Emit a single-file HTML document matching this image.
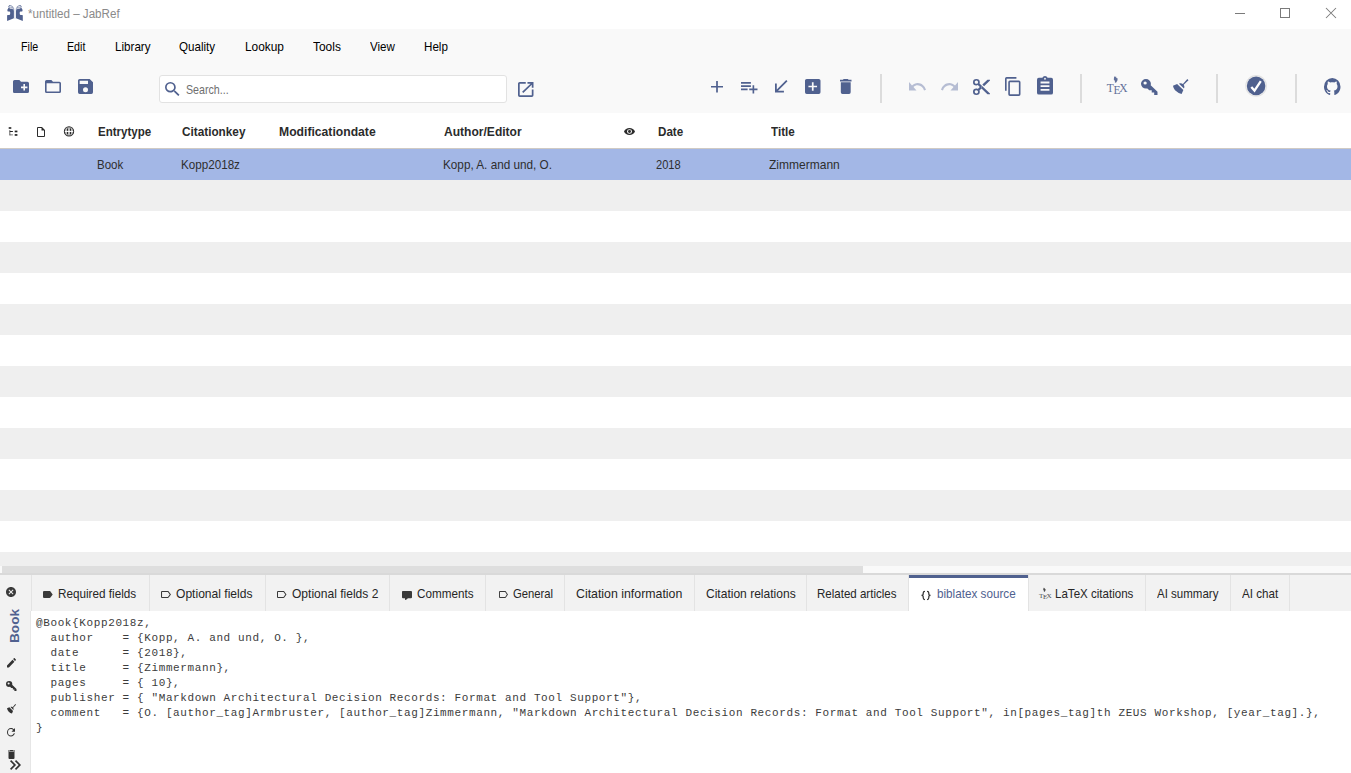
<!DOCTYPE html><html><head><meta charset="utf-8"><title>JabRef</title><style>
*{margin:0;padding:0;box-sizing:border-box}
html,body{width:1351px;height:773px;overflow:hidden;background:#f9f9f9;font-family:'Liberation Sans', sans-serif}
.a{position:absolute}
.t{position:absolute;white-space:pre;transform-origin:0 0;font-family:'Liberation Sans', sans-serif}
.ic{position:absolute;overflow:visible}
.code{position:absolute;font-family:'Liberation Mono',monospace;white-space:pre;color:#3c3c3c}
</style></head><body>
<div class="a" style="left:0;top:0;width:1351px;height:29px;background:#fff"></div>
<div class="a" style="left:159px;top:75px;width:348px;height:28px;background:#fff;border:1px solid #e2e2e2;border-radius:3px"></div>
<div class="a" style="left:880px;top:74px;width:2px;height:29px;background:#dcdcdc"></div>
<div class="a" style="left:1080px;top:74px;width:2px;height:29px;background:#dcdcdc"></div>
<div class="a" style="left:1216px;top:74px;width:2px;height:29px;background:#dcdcdc"></div>
<div class="a" style="left:1295px;top:74px;width:2px;height:29px;background:#dcdcdc"></div>
<div class="a" style="left:0;top:113px;width:1351px;height:35px;background:#fff"></div>
<div class="a" style="left:0;top:148px;width:1351px;height:1px;background:#cfcac4"></div>
<div class="a" style="left:0;top:149px;width:1351px;height:31px;background:#a3b7e6"></div>
<div class="a" style="left:0;top:180px;width:1351px;height:31px;background:#efefef"></div>
<div class="a" style="left:0;top:211px;width:1351px;height:31px;background:#fff"></div>
<div class="a" style="left:0;top:242px;width:1351px;height:31px;background:#efefef"></div>
<div class="a" style="left:0;top:273px;width:1351px;height:31px;background:#fff"></div>
<div class="a" style="left:0;top:304px;width:1351px;height:31px;background:#efefef"></div>
<div class="a" style="left:0;top:335px;width:1351px;height:31px;background:#fff"></div>
<div class="a" style="left:0;top:366px;width:1351px;height:31px;background:#efefef"></div>
<div class="a" style="left:0;top:397px;width:1351px;height:31px;background:#fff"></div>
<div class="a" style="left:0;top:428px;width:1351px;height:31px;background:#efefef"></div>
<div class="a" style="left:0;top:459px;width:1351px;height:31px;background:#fff"></div>
<div class="a" style="left:0;top:490px;width:1351px;height:31px;background:#efefef"></div>
<div class="a" style="left:0;top:521px;width:1351px;height:31px;background:#fff"></div>
<div class="a" style="left:0;top:552px;width:1351px;height:14px;background:#efefef"></div>
<div class="a" style="left:0;top:566px;width:1351px;height:8px;background:#f9f9f9"></div>
<div class="a" style="left:2px;top:566px;width:861px;height:8px;background:#dedede"></div>
<div class="a" style="left:0;top:573px;width:1351px;height:2px;background:#d9d9d9"></div>
<div class="a" style="left:0;top:575px;width:1351px;height:36px;background:#f2f2f2"></div>
<div class="a" style="left:31px;top:575px;width:1px;height:36px;background:#e3e3e3"></div>
<div class="a" style="left:149px;top:575px;width:1px;height:36px;background:#e3e3e3"></div>
<div class="a" style="left:265px;top:575px;width:1px;height:36px;background:#e3e3e3"></div>
<div class="a" style="left:389px;top:575px;width:1px;height:36px;background:#e3e3e3"></div>
<div class="a" style="left:485px;top:575px;width:1px;height:36px;background:#e3e3e3"></div>
<div class="a" style="left:564px;top:575px;width:1px;height:36px;background:#e3e3e3"></div>
<div class="a" style="left:694px;top:575px;width:1px;height:36px;background:#e3e3e3"></div>
<div class="a" style="left:806px;top:575px;width:1px;height:36px;background:#e3e3e3"></div>
<div class="a" style="left:908px;top:575px;width:1px;height:36px;background:#e3e3e3"></div>
<div class="a" style="left:1028px;top:575px;width:1px;height:36px;background:#e3e3e3"></div>
<div class="a" style="left:1145px;top:575px;width:1px;height:36px;background:#e3e3e3"></div>
<div class="a" style="left:1230px;top:575px;width:1px;height:36px;background:#e3e3e3"></div>
<div class="a" style="left:1289px;top:575px;width:1px;height:36px;background:#e3e3e3"></div>
<div class="a" style="left:909px;top:575px;width:119px;height:36px;background:#fff"></div>
<div class="a" style="left:909px;top:575px;width:119px;height:3px;background:#50618f"></div>
<div class="a" style="left:0;top:611px;width:31px;height:162px;background:#f2f2f2"></div>
<div class="a" style="left:30px;top:611px;width:1px;height:162px;background:#e6e6e6"></div>
<div class="a" style="left:31px;top:611px;width:1320px;height:162px;background:#fff"></div><svg class="ic" style="left:13px;top:80px;width:16px;height:13px" viewBox="2 4 20 16" preserveAspectRatio="none"><path fill="#50618f" d="M10,4L12,6H20A2,2 0 0,1 22,8V18A2,2 0 0,1 20,20H4C2.89,20 2,19.1 2,18V6C2,4.89 2.89,4 4,4H10M15,9V12H12V14H15V17H17V14H20V12H17V9H15Z"/></svg>
<svg class="ic" style="left:45px;top:80px;width:16px;height:13px" viewBox="2 4 20 16" preserveAspectRatio="none"><path fill="#50618f" d="M20,18H4V8H20M20,6H12L10,4H4C2.89,4 2,4.89 2,6V18A2,2 0 0,0 4,20H20A2,2 0 0,0 22,18V8C22,6.89 21.1,6 20,6Z"/></svg>
<svg class="ic" style="left:78px;top:79px;width:15px;height:15px" viewBox="3 3 18 18" preserveAspectRatio="none"><path fill="#50618f" d="M15,9H5V5H15M12,19A3,3 0 0,1 9,16A3,3 0 0,1 12,13A3,3 0 0,1 15,16A3,3 0 0,1 12,19M17,3H5C3.89,3 3,3.9 3,5V19A2,2 0 0,0 5,21H19A2,2 0 0,0 21,19V7L17,3Z"/></svg>
<svg class="ic" style="left:164.5px;top:82px;width:14.5px;height:14px" viewBox="3 3 17.5 17.5" preserveAspectRatio="none"><path fill="#50618f" d="M9.5,3A6.5,6.5 0 0,1 16,9.5C16,11.11 15.41,12.59 14.44,13.73L14.71,14H15.5L20.5,19L19,20.5L14,15.5V14.71L13.73,14.44C12.59,15.41 11.11,16 9.5,16A6.5,6.5 0 0,1 3,9.5A6.5,6.5 0 0,1 9.5,3M9.5,5C7,5 5,7 5,9.5C5,12 7,14 9.5,14C12,14 14,12 14,9.5C14,7 12,5 9.5,5Z"/></svg>
<svg class="ic" style="left:517.5px;top:82px;width:15.5px;height:15px" viewBox="3 3 18 18" preserveAspectRatio="none"><path fill="#50618f" d="M14,3V5H17.59L7.76,14.83L9.17,16.24L19,6.41V10H21V3M19,19H5V5H12V3H5C3.89,3 3,3.9 3,5V19A2,2 0 0,0 5,21H19A2,2 0 0,0 21,19V12H19V19Z"/></svg>
<svg class="ic" style="left:711px;top:80.5px;width:12px;height:11.5px" viewBox="5 5 14 14" preserveAspectRatio="none"><path fill="#50618f" d="M19,13H13V19H11V13H5V11H11V5H13V11H19V13Z"/></svg>
<svg class="ic" style="left:740.5px;top:81.5px;width:16.5px;height:11.5px" viewBox="2 6 20 14" preserveAspectRatio="none"><path fill="#50618f" d="M2,16H10V14H2M18,14V10H16V14H12V16H16V20H18V16H22V14M14,6H2V8H14M14,10H2V12H14V10Z"/></svg>
<svg class="ic" style="left:775px;top:80px;width:12.5px;height:12.5px" viewBox="5 5 14 14" preserveAspectRatio="none"><path fill="#50618f" d="M19,6.41L17.59,5L7,15.59V9H5V19H15V17H8.41L19,6.41Z"/></svg>
<svg class="ic" style="left:805px;top:79px;width:15.5px;height:15px" viewBox="3 3 18 18" preserveAspectRatio="none"><path fill="#50618f" d="M17,13H13V17H11V13H7V11H11V7H13V11H17M19,3H5C3.89,3 3,3.89 3,5V19A2,2 0 0,0 5,21H19A2,2 0 0,0 21,19V5C21,3.89 20.1,3 19,3Z"/></svg>
<svg class="ic" style="left:839.5px;top:79px;width:11.5px;height:15px" viewBox="5 3 14 18" preserveAspectRatio="none"><path fill="#50618f" d="M19,4H15.5L14.5,3H9.5L8.5,4H5V6H19M6,19A2,2 0 0,0 8,21H16A2,2 0 0,0 18,19V7H6V19Z"/></svg>
<svg class="ic" style="left:908.5px;top:82px;width:17.0px;height:8.5px" viewBox="2 7 20.469999313354492 9" preserveAspectRatio="none"><path fill="#b6bdd3" d="M12.5,8C9.85,8 7.45,9 5.6,10.6L2,7V16H11L7.38,12.38C8.77,11.22 10.54,10.5 12.5,10.5C16.04,10.5 19.05,12.81 20.1,16L22.47,15.22C21.08,11.03 17.15,8 12.5,8Z"/></svg>
<svg class="ic" style="left:940.5px;top:82px;width:17.0px;height:8.5px" viewBox="1.5399999618530273 7 20.459999084472656 9" preserveAspectRatio="none"><path fill="#b6bdd3" d="M18.4,10.6C16.55,9 14.15,8 11.5,8C6.85,8 2.92,11.03 1.54,15.22L3.9,16C4.95,12.81 7.95,10.5 11.5,10.5C13.45,10.5 15.23,11.22 16.62,12.38L13,16H22V7L18.4,10.6Z"/></svg>
<svg class="ic" style="left:972.5px;top:78.5px;width:17.0px;height:16.0px" viewBox="2 2 20 20" preserveAspectRatio="none"><path fill="#50618f" d="M19,3L13,9L15,11L22,4V3M12,12.5A0.5,0.5 0 0,1 11.5,12A0.5,0.5 0 0,1 12,11.5A0.5,0.5 0 0,1 12.5,12A0.5,0.5 0 0,1 12,12.5M6,20A2,2 0 0,1 4,18C4,16.89 4.9,16 6,16A2,2 0 0,1 8,18C8,19.11 7.1,20 6,20M6,8A2,2 0 0,1 4,6C4,4.89 4.9,4 6,4A2,2 0 0,1 8,6C8,7.11 7.1,8 6,8M9.64,7.64C9.87,7.14 10,6.59 10,6A4,4 0 0,0 6,2A4,4 0 0,0 2,6A4,4 0 0,0 6,10C6.59,10 7.14,9.870 7.64,9.64L10,12L7.64,14.36C7.14,14.13 6.59,14 6,14A4,4 0 0,0 2,18A4,4 0 0,0 6,22A4,4 0 0,0 10,18C10,17.41 9.87,16.86 9.64,16.36L12,14L19,21H22V20L9.64,7.64Z"/></svg>
<svg class="ic" style="left:1005px;top:77px;width:15.5px;height:19px" viewBox="2 1 19 22" preserveAspectRatio="none"><path fill="#50618f" d="M19,21H8V7H19M19,5H8A2,2 0 0,0 6,7V21A2,2 0 0,0 8,23H19A2,2 0 0,0 21,21V7A2,2 0 0,0 19,5M16,1H4A2,2 0 0,0 2,3V17H4V3H16V1Z"/></svg>
<svg class="ic" style="left:1037px;top:75.5px;width:16px;height:18.5px" viewBox="3 1 18 20" preserveAspectRatio="none"><path fill="#50618f" d="M19,3H14.82C14.4,1.84 13.3,1 12,1C10.7,1 9.6,1.84 9.18,3H5A2,2 0 0,0 3,5V19A2,2 0 0,0 5,21H19A2,2 0 0,0 21,19V5A2,2 0 0,0 19,3M12,3A1,1 0 0,1 13,4A1,1 0 0,1 12,5A1,1 0 0,1 11,4A1,1 0 0,1 12,3M7,7H17V9H7V7M7,11H17V13H7V11M7,15H17V17H7V15Z"/></svg>
<svg class="ic" style="left:1141px;top:78.5px;width:16.5px;height:16.0px" viewBox="2 2 20 20" preserveAspectRatio="none"><path fill="#50618f" d="M22,18V22H18V19H15V16H12L9.74,13.74C9.19,13.91 8.61,14 8,14A6,6 0 0,1 2,8A6,6 0 0,1 8,2A6,6 0 0,1 14,8C14,8.61 13.91,9.19 13.74,9.74L22,18M7,5A2,2 0 0,0 5,7A2,2 0 0,0 7,9A2,2 0 0,0 9,7A2,2 0 0,0 7,5Z"/></svg>
<svg class="ic" style="left:1173px;top:79px;width:15.5px;height:15px" viewBox="2.3499999046325684 2.7200000286102295 18.43000030517578 18.43000030517578" preserveAspectRatio="none"><path fill="#50618f" d="M19.36,2.72L20.78,4.14L15.06,9.85C16.07,11.3 16.2,13.07 15.38,14.48L9.5,8.6C10.93,7.78 12.69,7.91 14.14,8.92L19.36,2.72M5.93,17.57C3.92,15.56 2.69,13.16 2.35,10.92L7.23,8.83L14.67,16.27L12.58,21.15C10.34,20.81 7.94,19.58 5.93,17.57Z"/></svg>
<svg class="ic" style="left:1240px;top:70px;width:32px;height:32px" viewBox="1240 70 32 32"><circle cx="1256.1" cy="85.9" r="10.3" fill="none" stroke="#e3e3e3" stroke-width="1.2"/><circle cx="1256.1" cy="85.9" r="9.3" fill="#50618f"/><path d="M1251.3,86.9 L1254.5,90.6 L1260.8,81.2" fill="none" stroke="#fff" stroke-width="2.3" stroke-linejoin="miter"/></svg>
<svg class="ic" style="left:1324px;top:78px;width:16.5px;height:17px" viewBox="2 2 20 19.55240821838379" preserveAspectRatio="none"><path fill="#50618f" d="M12,2A10,10 0 0,0 2,12C2,16.42 4.87,20.17 8.84,21.5C9.34,21.58 9.5,21.27 9.5,21C9.5,20.77 9.5,20.14 9.5,19.31C6.73,19.91 6.14,17.97 6.14,17.97C5.68,16.81 5.03,16.5 5.030,16.5C4.12,15.88 5.1,15.9 5.1,15.9C6.1,15.97 6.63,16.93 6.63,16.93C7.5,18.45 8.97,18 9.54,17.76C9.63,17.11 9.89,16.67 10.17,16.42C7.95,16.17 5.64,15.31 5.64,11.5C5.64,10.39 6,9.5 6.65,8.79C6.55,8.54 6.2,7.5 6.75,6.15C6.75,6.15 7.59,5.88 9.5,7.17C10.29,6.95 11.15,6.84 12,6.84C12.85,6.84 13.71,6.95 14.5,7.17C16.41,5.88 17.25,6.15 17.25,6.15C17.8,7.5 17.45,8.54 17.35,8.79C18,9.5 18.36,10.39 18.36,11.5C18.36,15.32 16.04,16.16 13.81,16.41C14.17,16.72 14.5,17.33 14.5,18.26C14.5,19.6 14.5,20.68 14.5,21.09C14.5,21.36 14.66,21.68 15.17,21.5C19.14,20.16 22,16.42 22,12A10,10 0 0,0 12,2Z"/></svg>
<svg class="ic" style="left:37px;top:126.5px;width:8px;height:10.0px" viewBox="4 2 16 20" preserveAspectRatio="none"><path fill="#2b2b2b" d="M14,2H6A2,2 0 0,0 4,4V20A2,2 0 0,0 6,22H18A2,2 0 0,0 20,20V8L14,2M18,20H6V4H13V9H18V20Z"/></svg>
<svg class="ic" style="left:60px;top:122px;width:18px;height:18px" viewBox="60 122 18 18"><circle cx="69" cy="131.4" r="4.6" fill="#bbb" stroke="#2b2b2b" stroke-width="1.15"/><path d="M67.5,128.5 V134.3 M70.5,128.5 V134.3" stroke="#2b2b2b" stroke-width="1"/><path d="M64.8,131.4 H73.2" stroke="#fff" stroke-width="1.1"/></svg>
<svg class="ic" style="left:623.5px;top:128px;width:11.0px;height:7px" viewBox="1 4.5 22 15" preserveAspectRatio="none"><path fill="#2b2b2b" d="M12,9A3,3 0 0,0 9,12A3,3 0 0,0 12,15A3,3 0 0,0 15,12A3,3 0 0,0 12,9M12,17A5,5 0 0,1 7,12A5,5 0 0,1 12,7A5,5 0 0,1 17,12A5,5 0 0,1 12,17M12,4.5C7,4.5 2.73,7.61 1,12C2.73,16.39 7,19.5 12,19.5C17,19.5 21.27,16.39 23,12C21.27,7.61 17,4.5 12,4.5Z"/></svg>
<svg class="ic" style="left:43.3px;top:591px;width:9.700000000000003px;height:7px" viewBox="3 5 19 14" preserveAspectRatio="none"><path fill="#3a3a3a" d="M17.63,5.84C17.27,5.33 16.67,5 16,5H5A2,2 0 0,0 3,7V17A2,2 0 0,0 5,19H16C16.67,19 17.27,18.66 17.63,18.15L22,12L17.63,5.84Z"/></svg>
<svg class="ic" style="left:161px;top:591px;width:10px;height:7px" viewBox="3 5 19 14" preserveAspectRatio="none"><path fill="#3a3a3a" d="M16,17H5V7H16L19.55,12M17.63,5.84C17.27,5.33 16.67,5 16,5H5A2,2 0 0,0 3,7V17A2,2 0 0,0 5,19H16C16.67,19 17.27,18.66 17.63,18.15L22,12L17.63,5.84Z"/></svg>
<svg class="ic" style="left:277px;top:591px;width:9.5px;height:7px" viewBox="3 5 19 14" preserveAspectRatio="none"><path fill="#3a3a3a" d="M16,17H5V7H16L19.55,12M17.63,5.84C17.27,5.33 16.67,5 16,5H5A2,2 0 0,0 3,7V17A2,2 0 0,0 5,19H16C16.67,19 17.27,18.66 17.63,18.15L22,12L17.63,5.84Z"/></svg>
<svg class="ic" style="left:402px;top:591px;width:10px;height:9px" viewBox="2 2 20 20" preserveAspectRatio="none"><path fill="#3a3a3a" d="M9,22A1,1 0 0,1 8,21V18H4A2,2 0 0,1 2,16V4C2,2.89 2.9,2 4,2H20A2,2 0 0,1 22,4V16A2,2 0 0,1 20,18H13.9L10.2,21.71C10,21.9 9.75,22 9.5,22V22H9Z"/></svg>
<svg class="ic" style="left:498.5px;top:591px;width:9.0px;height:7px" viewBox="3 5 19 14" preserveAspectRatio="none"><path fill="#3a3a3a" d="M16,17H5V7H16L19.55,12M17.63,5.84C17.27,5.33 16.67,5 16,5H5A2,2 0 0,0 3,7V17A2,2 0 0,0 5,19H16C16.67,19 17.27,18.66 17.63,18.15L22,12L17.63,5.84Z"/></svg>
<svg class="ic" style="left:6px;top:586.5px;width:10px;height:10.0px" viewBox="2 2 20 20" preserveAspectRatio="none"><path fill="#3a3a3a" d="M12,2C17.53,2 22,6.47 22,12C22,17.53 17.53,22 12,22C6.47,22 2,17.53 2,12C2,6.47 6.47,2 12,2M15.59,7L12,10.59L8.41,7L7,8.41L10.59,12L7,15.59L8.41,17L12,13.41L15.59,17L17,15.59L13.41,12L17,8.41L15.59,7Z"/></svg>
<svg class="ic" style="left:6.5px;top:657.5px;width:9.0px;height:9.5px" viewBox="3 2.997499942779541 18.002500534057617 18.002500534057617" preserveAspectRatio="none"><path fill="#333" d="M20.71,7.04C21.1,6.65 21.1,6 20.71,5.63L18.37,3.29C18,2.9 17.35,2.9 16.96,3.29L15.12,5.12L18.87,8.87M3,17.25V21H6.75L17.81,9.93L14.06,6.18L3,17.25Z"/></svg>
<svg class="ic" style="left:6px;top:681px;width:10.5px;height:10px" viewBox="2 2 20 20" preserveAspectRatio="none"><path fill="#333" d="M22,18V22H18V19H15V16H12L9.74,13.74C9.19,13.91 8.61,14 8,14A6,6 0 0,1 2,8A6,6 0 0,1 8,2A6,6 0 0,1 14,8C14,8.61 13.91,9.19 13.74,9.74L22,18M7,5A2,2 0 0,0 5,7A2,2 0 0,0 7,9A2,2 0 0,0 9,7A2,2 0 0,0 7,5Z"/></svg>
<svg class="ic" style="left:6.5px;top:704px;width:9.0px;height:9.5px" viewBox="2.3499999046325684 2.7200000286102295 18.43000030517578 18.43000030517578" preserveAspectRatio="none"><path fill="#333" d="M19.36,2.72L20.78,4.14L15.06,9.85C16.07,11.3 16.2,13.07 15.38,14.48L9.5,8.6C10.93,7.78 12.69,7.91 14.14,8.92L19.36,2.72M5.93,17.57C3.92,15.56 2.69,13.16 2.35,10.92L7.23,8.83L14.67,16.27L12.58,21.15C10.34,20.81 7.94,19.58 5.93,17.57Z"/></svg>
<svg class="ic" style="left:7px;top:727.5px;width:8px;height:8.5px" viewBox="4 4 16 16" preserveAspectRatio="none"><path fill="#333" d="M17.65,6.35C16.2,4.9 14.21,4 12,4A8,8 0 0,0 4,12A8,8 0 0,0 12,20C15.73,20 18.84,17.45 19.73,14H17.65C16.83,16.33 14.61,18 12,18A6,6 0 0,1 6,12A6,6 0 0,1 12,6C13.66,6 15.14,6.690 16.22,7.78L13,11H20V4L17.65,6.35Z"/></svg>
<svg class="ic" style="left:7.5px;top:750px;width:7.0px;height:9px" viewBox="5 3 14 18" preserveAspectRatio="none"><path fill="#333" d="M19,4H15.5L14.5,3H9.5L8.5,4H5V6H19M6,19A2,2 0 0,0 8,21H16A2,2 0 0,0 18,19V7H6V19Z"/></svg>
<svg class="ic" style="left:10px;top:760px;width:11px;height:10px" viewBox="5.590000152587891 6 13.40999984741211 12" preserveAspectRatio="none"><path fill="#333" d="M5.59,7.41L7,6L13,12L7,18L5.59,16.59L10.17,12L5.59,7.41M11.59,7.41L13,6L19,12L13,18L11.59,16.59L16.17,12L11.59,7.41Z"/></svg><svg class="ic" style="left:0;top:0;width:30px;height:25px" viewBox="0 0 30 25"><g fill="#50618f"><g><path d="M7.4,9.6 Q7.5,9.1 8.2,9.1 L12.6,9.1 L13.9,10.4 L13.9,18.2 L7.1,20.9 L7.1,15.4 Q7.1,15 7.6,15 L9.4,14.9 Q10.2,14.7 10.2,13.6 L10.2,12.6 Q10.2,11.6 9.2,11.5 L8,11.4 Q7.4,11.3 7.4,10.8 Z"/><path d="M8.1,7.6 L8.3,6.2 L9.6,4.9 L10.8,5.1 L12.4,6.2 L13.9,7.4 L13.9,10.2 L12.6,9.1 L8.1,9.1 Z"/><path d="M7.9,7.4 L13.9,8.9 M8.4,6 L13.9,7.5 M10.9,5 L10.9,9" stroke="#fff" stroke-width="0.7"/></g><g transform="translate(29.9,0) scale(-1,1)"><path d="M7.4,9.6 Q7.5,9.1 8.2,9.1 L12.6,9.1 L13.9,10.4 L13.9,18.2 L7.1,20.9 L7.1,15.4 Q7.1,15 7.6,15 L9.4,14.9 Q10.2,14.7 10.2,13.6 L10.2,12.6 Q10.2,11.6 9.2,11.5 L8,11.4 Q7.4,11.3 7.4,10.8 Z"/><path d="M8.1,7.6 L8.3,6.2 L9.6,4.9 L10.8,5.1 L12.4,6.2 L13.9,7.4 L13.9,10.2 L12.6,9.1 L8.1,9.1 Z"/><path d="M7.9,7.4 L13.9,8.9 M8.4,6 L13.9,7.5 M10.9,5 L10.9,9" stroke="#fff" stroke-width="0.7"/></g><rect x="14.3" y="8.5" width="1.3" height="10.5" opacity="0.2"/></g></svg>
<div class="a" style="left:1235px;top:13px;width:10px;height:1px;background:#7a7a7a"></div>
<div class="a" style="left:1280px;top:8px;width:10px;height:10px;border:1px solid #7a7a7a"></div>
<svg class="ic" style="left:1325px;top:7px;width:12px;height:12px" viewBox="0 0 12 12"><path d="M1,1 L11,11 M11,1 L1,11" stroke="#7a7a7a" stroke-width="1.05"/></svg>
<svg class="ic" style="left:0;top:120px;width:24px;height:20px" viewBox="0 120 24 20"><g fill="#222"><rect x="8.7" y="127.2" width="2.6" height="1.6"/><rect x="9.1" y="130.1" width="1.3" height="5.3" opacity="0.55"/><rect x="9.8" y="131" width="3.1" height="1" /><rect x="9.8" y="134.3" width="3.1" height="1.1" opacity="0.55"/><rect x="14.7" y="130.6" width="2.7" height="1.7"/><rect x="14.7" y="134.1" width="2.7" height="1.7"/></g></svg>
<svg class="ic" style="left:1107px;top:74.5px;width:22.0px;height:20.0px" viewBox="0 0 22 20"><g fill="#50618f" font-family="Liberation Serif, serif" font-size="11.5"><g opacity="0.9"><text x="-0.2" y="17.2">T</text><text x="6.4" y="19.1">E</text><text x="12.2" y="17.2">X</text></g><path d="M7.2,1 L8,2.3 L9,1.2 L9.4,3 L10.7,3.6 L10.4,5.5 L9.2,7.6 L7.9,7.7 L7.9,6 L6.8,4.5 Z" opacity="0.9"/></g></svg>
<svg class="ic" style="left:1038.8px;top:586.8px;width:13.64px;height:12.4px" viewBox="0 0 22 20"><g fill="#3a3a3a" font-family="Liberation Serif, serif" font-size="11.5"><g opacity="0.9"><text x="-0.2" y="17.2">T</text><text x="6.4" y="19.1">E</text><text x="12.2" y="17.2">X</text></g><path d="M7.2,1 L8,2.3 L9,1.2 L9.4,3 L10.7,3.6 L10.4,5.5 L9.2,7.6 L7.9,7.7 L7.9,6 L6.8,4.5 Z" opacity="0.9"/></g></svg>
<svg class="ic" style="left:915px;top:585px;width:20px;height:20px" viewBox="915 585 20 20"><g fill="none" stroke="#333" stroke-width="1.25"><path d="M925,591.3 Q923.2,591.3 923.2,593 L923.2,594.3 Q923.2,595.4 921.5,595.4 Q923.2,595.4 923.2,596.6 L923.2,597.8 Q923.2,599.6 925,599.6"/><path d="M927,591.3 Q928.8,591.3 928.8,593 L928.8,594.3 Q928.8,595.4 930.5,595.4 Q928.8,595.4 928.8,596.6 L928.8,597.8 Q928.8,599.6 927,599.6"/></g></svg>
<div class="t" style="left:8.0px;top:642.5px;font-size:13px;line-height:13px;font-weight:700;color:#50618f;transform:rotate(-90deg) scaleX(1.05)">Book</div><div class="t" style="left:28.00px;top:8.00px;font-size:12px;line-height:12px;font-weight:400;color:#8a8a8a;transform:scaleX(0.9672)">*untitled – JabRef</div>
<div class="t" style="left:21.00px;top:40.00px;font-size:13px;line-height:13px;font-weight:400;color:#000;transform:scaleX(0.8200)">File</div>
<div class="t" style="left:67.00px;top:40.00px;font-size:13px;line-height:13px;font-weight:400;color:#000;transform:scaleX(0.8200)">Edit</div>
<div class="t" style="left:115.00px;top:40.00px;font-size:13px;line-height:13px;font-weight:400;color:#000;transform:scaleX(0.8945)">Library</div>
<div class="t" style="left:179.00px;top:40.00px;font-size:13px;line-height:13px;font-weight:400;color:#000;transform:scaleX(0.8924)">Quality</div>
<div class="t" style="left:245.00px;top:40.00px;font-size:13px;line-height:13px;font-weight:400;color:#000;transform:scaleX(0.9137)">Lookup</div>
<div class="t" style="left:313.00px;top:40.00px;font-size:13px;line-height:13px;font-weight:400;color:#000;transform:scaleX(0.9184)">Tools</div>
<div class="t" style="left:370.00px;top:40.00px;font-size:13px;line-height:13px;font-weight:400;color:#000;transform:scaleX(0.8898)">View</div>
<div class="t" style="left:424.00px;top:40.00px;font-size:13px;line-height:13px;font-weight:400;color:#000;transform:scaleX(0.8945)">Help</div>
<div class="t" style="left:186.00px;top:83.00px;font-size:13px;line-height:13px;font-weight:400;color:#6f6f6f;transform:scaleX(0.8206)">Search...</div>
<div class="t" style="left:97.66px;top:125.00px;font-size:13px;line-height:13px;font-weight:700;color:#2b2b2b;transform:scaleX(0.8873)">Entrytype</div>
<div class="t" style="left:182.45px;top:125.00px;font-size:13px;line-height:13px;font-weight:700;color:#2b2b2b;transform:scaleX(0.9051)">Citationkey</div>
<div class="t" style="left:278.65px;top:125.00px;font-size:13px;line-height:13px;font-weight:700;color:#2b2b2b;transform:scaleX(0.9358)">Modificationdate</div>
<div class="t" style="left:444.23px;top:125.00px;font-size:13px;line-height:13px;font-weight:700;color:#2b2b2b;transform:scaleX(0.9271)">Author/Editor</div>
<div class="t" style="left:657.65px;top:125.00px;font-size:13px;line-height:13px;font-weight:700;color:#2b2b2b;transform:scaleX(0.8929)">Date</div>
<div class="t" style="left:770.58px;top:125.00px;font-size:13px;line-height:13px;font-weight:700;color:#2b2b2b;transform:scaleX(0.8963)">Title</div>
<div class="t" style="left:96.68px;top:158.00px;font-size:13px;line-height:13px;font-weight:400;color:#2e2e2e;transform:scaleX(0.8866)">Book</div>
<div class="t" style="left:181.46px;top:158.00px;font-size:13px;line-height:13px;font-weight:400;color:#2e2e2e;transform:scaleX(0.8961)">Kopp2018z</div>
<div class="t" style="left:443.00px;top:158.00px;font-size:13px;line-height:13px;font-weight:400;color:#2e2e2e;transform:scaleX(0.9029)">Kopp, A. and und, O.</div>
<div class="t" style="left:656.31px;top:158.00px;font-size:13px;line-height:13px;font-weight:400;color:#2e2e2e;transform:scaleX(0.8548)">2018</div>
<div class="t" style="left:768.78px;top:158.00px;font-size:13px;line-height:13px;font-weight:400;color:#2e2e2e;transform:scaleX(0.9242)">Zimmermann</div>
<div class="t" style="left:58.33px;top:587.00px;font-size:13px;line-height:13px;font-weight:400;color:#262626;transform:scaleX(0.9010)">Required fields</div>
<div class="t" style="left:176.34px;top:587.00px;font-size:13px;line-height:13px;font-weight:400;color:#262626;transform:scaleX(0.9287)">Optional fields</div>
<div class="t" style="left:292.00px;top:587.00px;font-size:13px;line-height:13px;font-weight:400;color:#262626;transform:scaleX(0.9266)">Optional fields 2</div>
<div class="t" style="left:417.21px;top:587.00px;font-size:13px;line-height:13px;font-weight:400;color:#262626;transform:scaleX(0.8991)">Comments</div>
<div class="t" style="left:513.49px;top:587.00px;font-size:13px;line-height:13px;font-weight:400;color:#262626;transform:scaleX(0.8674)">General</div>
<div class="t" style="left:576.10px;top:587.00px;font-size:13px;line-height:13px;font-weight:400;color:#262626;transform:scaleX(0.9490)">Citation information</div>
<div class="t" style="left:705.72px;top:587.00px;font-size:13px;line-height:13px;font-weight:400;color:#262626;transform:scaleX(0.9259)">Citation relations</div>
<div class="t" style="left:817.47px;top:587.00px;font-size:13px;line-height:13px;font-weight:400;color:#262626;transform:scaleX(0.8866)">Related articles</div>
<div class="t" style="left:936.56px;top:587.00px;font-size:13px;line-height:13px;font-weight:400;color:#50618f;transform:scaleX(0.8998)">biblatex source</div>
<div class="t" style="left:1055.09px;top:587.00px;font-size:13px;line-height:13px;font-weight:400;color:#262626;transform:scaleX(0.8888)">LaTeX citations</div>
<div class="t" style="left:1157.10px;top:587.00px;font-size:13px;line-height:13px;font-weight:400;color:#262626;transform:scaleX(0.8858)">AI summary</div>
<div class="t" style="left:1242.22px;top:587.00px;font-size:13px;line-height:13px;font-weight:400;color:#262626;transform:scaleX(0.8932)">AI chat</div><div class="code" style="left:36px;top:615.5px;font-size:11px;line-height:15px;letter-spacing:0.615px">@Book{Kopp2018z,
  author    = {Kopp, A. and und, O. },
  date      = {2018},
  title     = {Zimmermann},
  pages     = { 10},
  publisher = { "Markdown Architectural Decision Records: Format and Tool Support"},
  comment   = {O. [author_tag]Armbruster, [author_tag]Zimmermann, "Markdown Architectural Decision Records: Format and Tool Support", in[pages_tag]th ZEUS Workshop, [year_tag].},
}</div>
</body></html>
